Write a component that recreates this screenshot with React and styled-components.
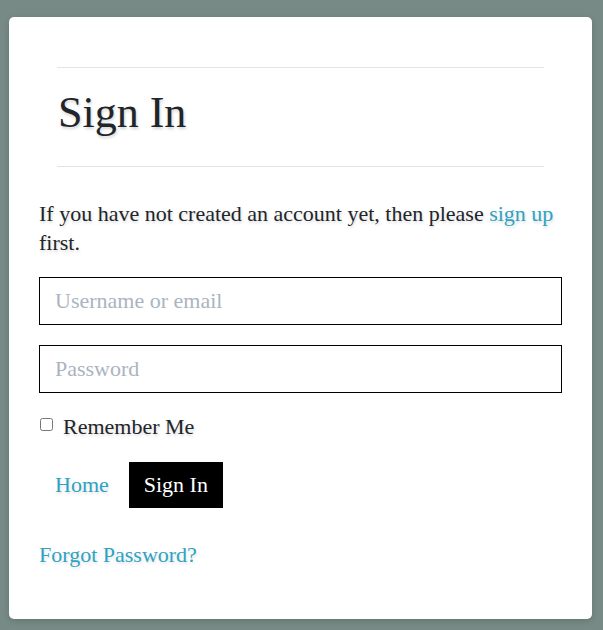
import React from "react";
import styled, { createGlobalStyle } from "styled-components";

const Global = createGlobalStyle`
  html, body { margin: 0; padding: 0; }
  body {
    background: #778a85;
    font-family: "Liberation Serif", "Times New Roman", serif;
    color: #212529;
  }
`;

const Page = styled.div`
  padding: 17px 11px 12px 9px;
`;

const Card = styled.div`
  background: #fff;
  border-radius: 5px;
  box-shadow: 0 2px 6px rgba(0, 0, 0, 0.15);
  padding: 50px 30px 51px;
  display: flex;
  flex-direction: column;
`;

const Header = styled.div`
  margin: 0 18px;
  border-top: 1px solid #e4e4e4;
  border-bottom: 1px solid #e4e4e4;
  padding: 17px 0 25px 1px;
`;

const Title = styled.h1`
  margin: 0;
  font-size: 44px;
  font-weight: 400;
  line-height: 56px;
  color: #212529;
  text-shadow: 1px 2px 3px rgba(0, 0, 0, 0.18);
`;

const Intro = styled.p`
  margin: 32px 0 20px;
  font-size: 22px;
  line-height: 29px;
  text-shadow: 1px 2px 3px rgba(0, 0, 0, 0.15);
`;

const Link = styled.a`
  color: #2ea3c3;
  text-decoration: none;
  cursor: pointer;
`;

const Input = styled.input`
  box-sizing: border-box;
  width: 100%;
  height: 48px;
  border: 1px solid #000;
  padding: 0 15px;
  margin-bottom: ${(p) => p.$gap || 0}px;
  font-family: inherit;
  font-size: 22px;
  color: #212529;
  outline: none;
  &::placeholder {
    color: #aab4bf;
  }
`;

const CheckRow = styled.label`
  display: flex;
  align-items: center;
  gap: 10px;
  margin-top: 21px;
  font-size: 22px;
  text-shadow: 1px 2px 3px rgba(0, 0, 0, 0.15);
`;

const Check = styled.input`
  margin: 0 0 6px 1px;
  width: 13px;
  height: 13px;
`;

const Actions = styled.div`
  display: flex;
  align-items: center;
  margin-top: 22px;
`;

const HomeLink = styled(Link)`
  font-size: 22px;
  padding: 0 20px 0 16px;
  text-shadow: 1px 2px 3px rgba(0, 0, 0, 0.12);
`;

const Button = styled.button`
  background: #000;
  color: #fff;
  border: none;
  height: 46px;
  padding: 0 15px;
  font-family: inherit;
  font-size: 22px;
  cursor: pointer;
`;

const Forgot = styled(Link)`
  margin-top: 34px;
  font-size: 22px;
  align-self: flex-start;
  text-shadow: 1px 2px 3px rgba(0, 0, 0, 0.12);
`;

export default function App() {
  return (
    <>
      <Global />
      <Page>
        <Card>
          <Header>
            <Title>Sign In</Title>
          </Header>
          <Intro>
            If you have not created an account yet, then please <Link>sign up</Link> first.
          </Intro>
          <Input placeholder="Username or email" $gap={20} />
          <Input type="password" placeholder="Password" />
          <CheckRow>
            <Check type="checkbox" />
            Remember Me
          </CheckRow>
          <Actions>
            <HomeLink>Home</HomeLink>
            <Button>Sign In</Button>
          </Actions>
          <Forgot>Forgot Password?</Forgot>
        </Card>
      </Page>
    </>
  );
}
